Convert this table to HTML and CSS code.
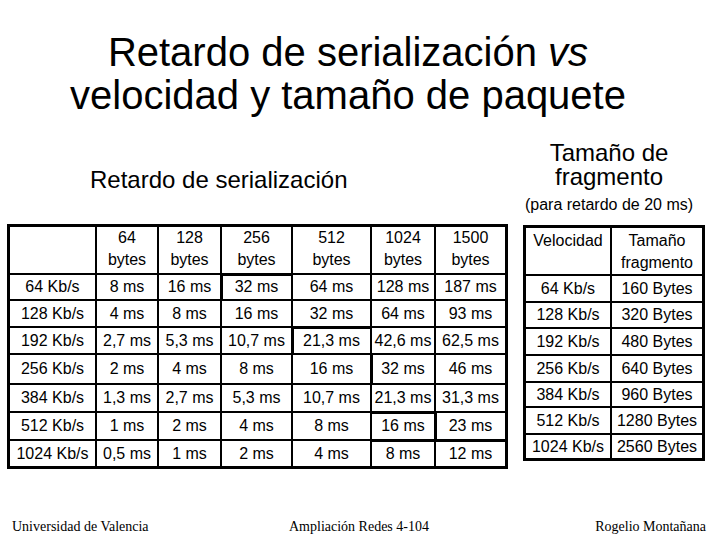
FILE: index.html
```html
<!DOCTYPE html>
<html lang="es">
<head>
<meta charset="utf-8">
<title>Retardo de serialización vs velocidad y tamaño de paquete</title>
<link rel="stylesheet" href="styles.css">
</head>
<body>
<h1 class="title">Retardo de serialización <i>vs</i><br>velocidad y tamaño de paquete</h1>
<main class="content">
  <section class="left">
    <h2 class="subtitle">Retardo de serialización</h2>
    <table class="ser">
      <thead>
        <tr><th></th><th>64<br>bytes</th><th>128<br>bytes</th><th>256<br>bytes</th><th>512<br>bytes</th><th>1024<br>bytes</th><th>1500<br>bytes</th></tr>
      </thead>
      <tbody>
        <tr><td>64 Kb/s</td><td>8 ms</td><td>16 ms</td><td class="tk-top tk-left">32 ms</td><td>64 ms</td><td>128 ms</td><td>187 ms</td></tr>
        <tr><td>128 Kb/s</td><td>4 ms</td><td>8 ms</td><td>16 ms</td><td>32 ms</td><td>64 ms</td><td>93 ms</td></tr>
        <tr><td>192 Kb/s</td><td>2,7 ms</td><td>5,3 ms</td><td>10,7 ms</td><td class="tk-top tk-left">21,3 ms</td><td>42,6 ms</td><td>62,5 ms</td></tr>
        <tr><td>256 Kb/s</td><td>2 ms</td><td>4 ms</td><td>8 ms</td><td>16 ms</td><td class="tk-left">32 ms</td><td>46 ms</td></tr>
        <tr><td>384 Kb/s</td><td>1,3 ms</td><td>2,7 ms</td><td>5,3 ms</td><td>10,7 ms</td><td>21,3 ms</td><td>31,3 ms</td></tr>
        <tr><td>512 Kb/s</td><td>1 ms</td><td>2 ms</td><td>4 ms</td><td>8 ms</td><td class="tk-top">16 ms</td><td class="tk-left">23 ms</td></tr>
        <tr><td>1024 Kb/s</td><td>0,5 ms</td><td>1 ms</td><td>2 ms</td><td>4 ms</td><td class="tk-top">8 ms</td><td class="tk-top">12 ms</td></tr>
      </tbody>
    </table>
  </section>
  <section class="right">
    <h2 class="frag-title">Tamaño de<br>fragmento</h2>
    <p class="note">(para retardo de 20 ms)</p>
    <table class="frag">
      <thead>
        <tr><th>Velocidad</th><th>Tamaño<br>fragmento</th></tr>
      </thead>
      <tbody>
        <tr><td>64 Kb/s</td><td>160 Bytes</td></tr>
        <tr><td>128 Kb/s</td><td>320 Bytes</td></tr>
        <tr><td>192 Kb/s</td><td>480 Bytes</td></tr>
        <tr><td>256 Kb/s</td><td>640 Bytes</td></tr>
        <tr><td>384 Kb/s</td><td>960 Bytes</td></tr>
        <tr><td>512 Kb/s</td><td>1280 Bytes</td></tr>
        <tr><td>1024 Kb/s</td><td>2560 Bytes</td></tr>
      </tbody>
    </table>
  </section>
</main>
<footer class="footer">
  <span class="f-left">Universidad de Valencia</span>
  <span class="f-mid">Ampliación Redes 4-104</span>
  <span class="f-right">Rogelio Montañana</span>
</footer>
</body>
</html>
```
FILE: styles.css
```css
* { box-sizing: border-box; }
html, body { margin: 0; padding: 0; background: #fff; }
body {
  width: 720px;
  height: 540px;
  overflow: hidden;
  display: flex;
  flex-direction: column;
  font-family: "Liberation Sans", Arial, sans-serif;
  color: #000;
}
.title {
  margin: 31px 24px 0 0;
  font-size: 40px;
  line-height: 43px;
  font-weight: normal;
  text-align: center;
}
.content {
  display: flex;
  align-items: flex-start;
  gap: 15px;
  margin-top: 24px;
  padding-left: 7px;
}
.left { padding-top: 27px; }
.subtitle {
  margin: 0 0 32px 83px;
  font-size: 24px;
  line-height: 24px;
  font-weight: normal;
}
.right { width: 182px; }
.frag-title {
  margin: 0;
  padding-right: 10px;
  font-size: 24px;
  line-height: 24px;
  font-weight: normal;
  text-align: center;
}
.note {
  margin: 6px 0 10px;
  padding-right: 10px;
  font-size: 16px;
  line-height: 20px;
  text-align: center;
}
table {
  border-collapse: separate;
  border-spacing: 0;
  border: 3px solid #000;
  table-layout: fixed;
  font-size: 16px;
  line-height: 20px;
}
th, td {
  padding: 0;
  border-right: 2px solid #000;
  border-bottom: 2px solid #000;
  text-align: center;
  vertical-align: middle;
  font-weight: normal;
  white-space: nowrap;
}
th:last-child, td:last-child { border-right: 0; }
tbody tr:last-child td { border-bottom: 0; }
thead th { vertical-align: top; line-height: 22px; }
thead tr { height: 48px; }

/* slightly heavier rule segments, as in the original slide */
.tk-top { box-shadow: inset 0 1px 0 #000; }
.tk-left { box-shadow: inset 1px 0 0 #000; }
.tk-top.tk-left { box-shadow: inset 1px 1px 0 #000; }

.ser { width: 501px; }
.ser th:nth-child(1) { width: 87px; }
.ser th:nth-child(2) { width: 62px; }
.ser th:nth-child(3) { width: 63px; }
.ser th:nth-child(4) { width: 71px; }
.ser th:nth-child(5) { width: 79px; }
.ser th:nth-child(6) { width: 64px; }
.ser th:nth-child(7) { width: 69px; }
.ser tbody tr:nth-child(1) { height: 26px; }
.ser tbody tr:nth-child(2) { height: 27px; }
.ser tbody tr:nth-child(3) { height: 27px; }
.ser tbody tr:nth-child(4) { height: 30px; }
.ser tbody tr:nth-child(5) { height: 28px; }
.ser tbody tr:nth-child(6) { height: 28px; }
.ser tbody tr:nth-child(7) { height: 25px; }

.frag { width: 182px; }
.frag th { padding-top: 2px; }
.frag th:nth-child(1) { width: 86px; }
.frag th:nth-child(2) { width: 90px; }
.frag tbody tr:nth-child(1) { height: 27px; }
.frag tbody tr:nth-child(2) { height: 26px; }
.frag tbody tr:nth-child(3) { height: 27px; }
.frag tbody tr:nth-child(4) { height: 27px; }
.frag tbody tr:nth-child(5) { height: 25px; }
.frag tbody tr:nth-child(6) { height: 27px; }
.frag tbody tr:nth-child(7) { height: 23px; }

.footer {
  margin-top: auto;
  display: grid;
  grid-template-columns: 1fr auto 1fr;
  padding: 0 14px 5px 12px;
  font-family: "Liberation Serif", "Times New Roman", serif;
  font-size: 14px;
  line-height: 16px;
}
.f-left { justify-self: start; }
.f-right { justify-self: end; }
```
